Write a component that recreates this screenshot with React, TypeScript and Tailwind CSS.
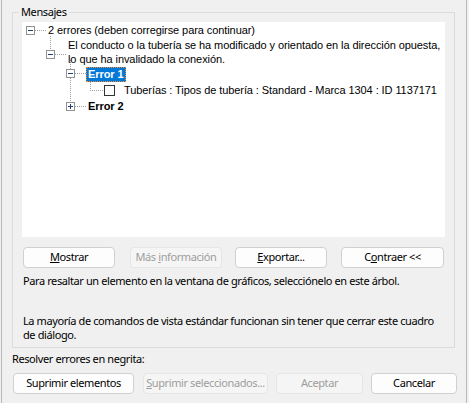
import React from 'react';

const ui = "font-['Noto_Sans',sans-serif] text-[11px] tracking-[-0.4px]";
const tree = "font-['Liberation_Sans',Arial,sans-serif] text-[11px] tracking-[-0.08px]";

const Dots = ({ x1, y1, x2, y2 }: { x1: number; y1: number; x2: number; y2: number }) => {
  const out = [];
  if (y1 === y2) {
    for (let x = x1; x <= x2; x += 2) out.push(<rect key={x} x={x} y={y1} width={1} height={1} />);
  } else {
    for (let y = y1; y <= y2; y += 2) out.push(<rect key={y} x={x1} y={y} width={1} height={1} />);
  }
  return <g fill="#a0a0a0">{out}</g>;
};

const Expander = ({ x, y, plus }: { x: number; y: number; plus?: boolean }) => (
  <g>
    <rect x={x + 0.5} y={y + 0.5} width={8} height={8} fill="#fff" stroke="#919191" />
    <rect x={x + 2} y={y + 4} width={5} height={1} fill="#1f3f7a" />
    {plus && <rect x={x + 4} y={y + 2} width={1} height={5} fill="#1f3f7a" />}
  </g>
);

const Btn = ({ children, className = '', disabled }: { children: React.ReactNode; className?: string; disabled?: boolean }) => (
  <div
    className={`h-[21px] flex items-center justify-center whitespace-nowrap rounded-[4px] border ${
      disabled ? 'bg-[#f5f5f5] border-[#e6e6e6] text-[#9d9d9d]' : 'bg-[#fdfdfd] border-[#d0d0d0] text-black'
    } ${className}`}
  >
    {children}
  </div>
);

const App = () => {
  return (
    <div className={`w-[469px] h-[403px] bg-[#f0f0f0] ${ui} text-black`}>
      <div className="ml-px w-[466px] h-[403px] border-x border-[#b9b9b9] pl-[10px] pt-[12px]">
        {/* Mensajes group */}
        <div className="relative w-[443px] h-[336px] border border-[#dcdcdc] pl-[9px] pt-[9px]">
          <span className="absolute left-[6px] top-[-9px] px-[2px] bg-[#f0f0f0] leading-[16px]">Mensajes</span>

          <div className={`relative w-[423px] h-[215px] bg-white whitespace-nowrap ${tree}`}>
            <svg className="absolute left-0 top-0" width={130} height={100}>
              <Dots x1={13} y1={8} x2={24} y2={8} />
              <Dots x1={28} y1={14} x2={28} y2={27} />
              <Dots x1={33} y1={32} x2={44} y2={32} />
              <Dots x1={48} y1={38} x2={48} y2={46} />
              <Dots x1={53} y1={51} x2={63} y2={51} />
              <Dots x1={48} y1={56} x2={48} y2={79} />
              <Dots x1={68} y1={60} x2={68} y2={68} />
              <Dots x1={68} y1={68} x2={80} y2={68} />
              <Dots x1={53} y1={84} x2={64} y2={84} />
              <Expander x={4} y={4} />
              <Expander x={24} y={28} />
              <Expander x={44} y={47} />
              <Expander x={44} y={80} plus />
            </svg>
            <div className="relative">
              <div className="h-4 pl-[26px] leading-4">2 errores (deben corregirse para continuar)</div>
              <div className="h-[28px] pl-[46px] leading-[14px]">
                El conducto o la tubería se ha modificado y orientado en la dirección opuesta,
                <br />
                lo que ha invalidado la conexión.
              </div>
              <div className="h-4 pl-[64px]">
                <span className="inline-block h-[15px] px-px leading-[13px] bg-[#0078d7] text-white font-bold border border-dotted border-[#ff8728]">
                  Error 1
                </span>
              </div>
              <div className="h-4 pl-[82px] flex items-center">
                <span className="w-[11px] h-[11px] border border-[#333] bg-white" />
                <span className="ml-[9px] leading-4">Tuberías : Tipos de tubería : Standard - Marca 1304 : ID 1137171</span>
              </div>
              <div className="h-4 pl-[66px] leading-4 font-bold">Error 2</div>
            </div>
          </div>

          <div className="flex mt-[10px]">
            <Btn className="ml-px w-[92px]">
              <span><u>M</u>ostrar</span>
            </Btn>
            <Btn className="ml-[15px] w-[92px]" disabled>
              <span>Más <u>i</u>nformación</span>
            </Btn>
            <Btn className="ml-[13px] w-[92px]">
              <span><u>E</u>xportar...</span>
            </Btn>
            <Btn className="ml-[14px] w-[103px]">
              <span>C<u>o</u>ntraer &lt;&lt;</span>
            </Btn>
          </div>

          <p className="ml-px mt-[5px] leading-4 whitespace-nowrap">
            Para resaltar un elemento en la ventana de gráficos, selecciónelo en este árbol.
          </p>
          <p className="ml-px mt-[25px] leading-[14px] whitespace-nowrap">
            La mayoría de comandos de vista estándar funcionan sin tener que cerrar este cuadro
            <br />
            de diálogo.
          </p>
        </div>

        <p className="mt-[3px] leading-[15px] whitespace-nowrap">Resolver errores en negrita:</p>

        <div className="flex mt-[7px]">
          <Btn className="ml-px w-[121px]">Suprimir elementos</Btn>
          <Btn className="ml-[9px] w-[125px]" disabled>
            <span><u>S</u>uprimir seleccionados...</span>
          </Btn>
          <Btn className="ml-[8px] w-[87px]" disabled>Aceptar</Btn>
          <Btn className="ml-[8px] w-[86px]">Cancelar</Btn>
        </div>
      </div>
    </div>
  );
};

export default App;
